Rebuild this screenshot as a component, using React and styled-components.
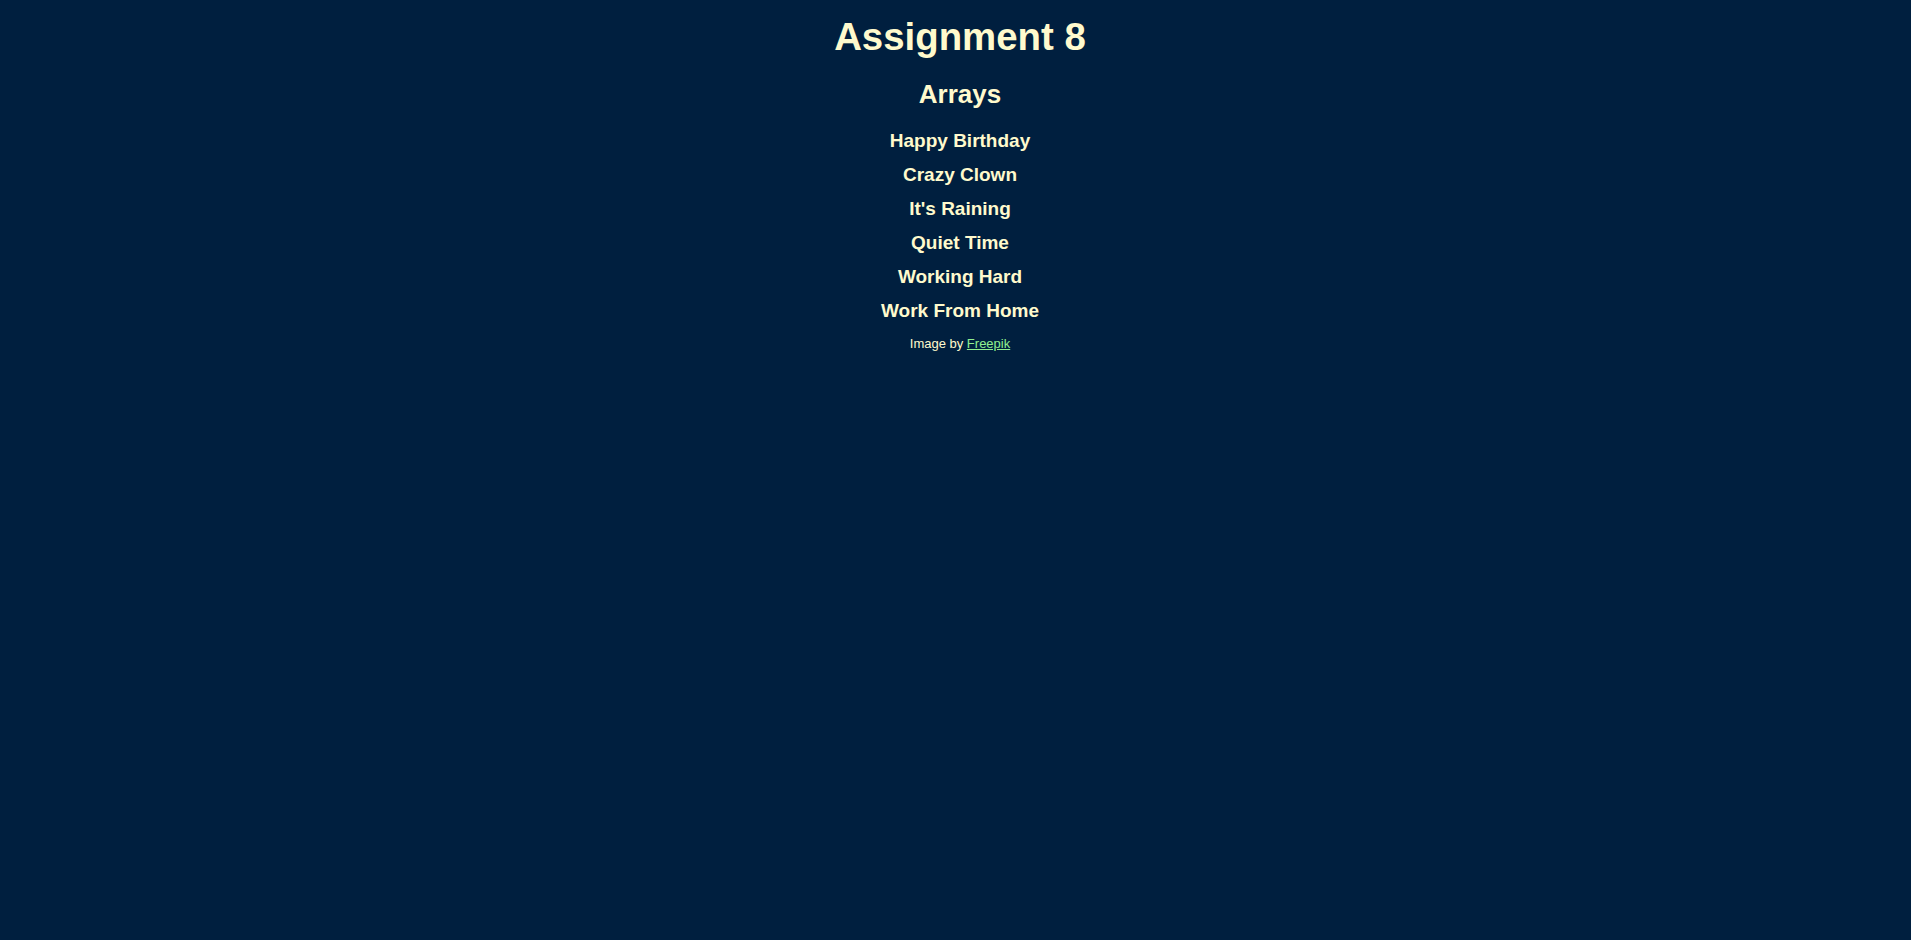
import styled, { createGlobalStyle } from 'styled-components'

const GlobalStyle = createGlobalStyle`
  html, body {
    margin: 0;
    padding: 0;
    background-color: #001f3f;
  }
`

const Page = styled.main`
  min-height: 100vh;
  display: flex;
  flex-direction: column;
  align-items: center;
  padding: 15px 0 0 9px;
  box-sizing: border-box;
  background-color: #001f3f;
  color: #fffacd;
  font-family: 'Liberation Sans', Arial, sans-serif;
  text-align: center;
`

const Title = styled.h1`
  margin: 0;
  font-size: 38.4px;
  line-height: 44px;
  font-weight: bold;
`

const SubTitle = styled.h2`
  margin: 20px 0 0;
  font-size: 26px;
  line-height: 30px;
  font-weight: bold;
`

const List = styled.div`
  display: flex;
  flex-direction: column;
  align-items: center;
  gap: 12.2px;
  margin-top: 20.5px;
`

const Item = styled.h3`
  margin: 0;
  font-size: 19px;
  line-height: 22px;
  font-weight: bold;
`

const Credit = styled.p`
  margin: 13.5px 0 0;
  font-size: 13px;
  line-height: 15px;
`

const Link = styled.a`
  color: #90ee90;
`

const items = [
  'Happy Birthday',
  'Crazy Clown',
  "It's Raining",
  'Quiet Time',
  'Working Hard',
  'Work From Home',
]

const App = () => {
  return (
    <>
      <GlobalStyle />
      <Page>
        <Title>Assignment 8</Title>
        <SubTitle>Arrays</SubTitle>
        <List>
          {items.map((item) => (
            <Item key={item}>{item}</Item>
          ))}
        </List>
        <Credit>
          Image by <Link href="#">Freepik</Link>
        </Credit>
      </Page>
    </>
  )
}

export default App
